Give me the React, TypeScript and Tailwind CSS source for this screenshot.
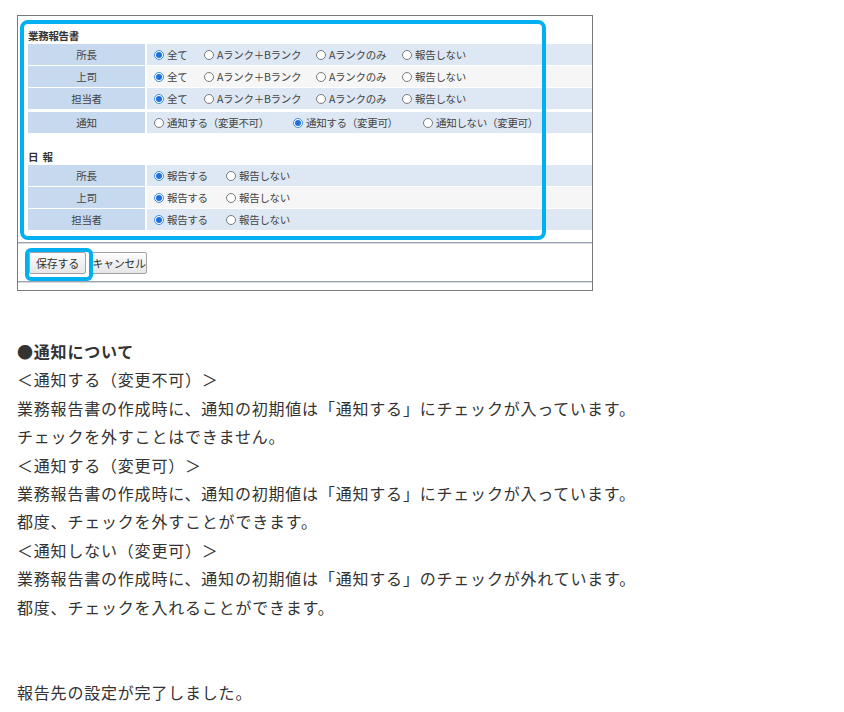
import React from "react";

type Opt = { label: string; checked?: boolean; w?: string };

function Radio({ checked }: { checked?: boolean }) {
  return checked ? (
    <span className="flex h-[10px] w-[10px] shrink-0 items-center justify-center rounded-full border border-[#3d8fe0] bg-white">
      <span className="h-[6px] w-[6px] rounded-full bg-[#1f6fdc]" />
    </span>
  ) : (
    <span className="h-[10px] w-[10px] shrink-0 rounded-full border border-[#7a7a7a] bg-white" />
  );
}

function Row({
  label,
  options,
  alt,
}: {
  label: string;
  options: Opt[];
  alt?: boolean;
}) {
  return (
    <div className="flex h-[21px] gap-[2px]">
      <div className="flex w-[117px] items-center justify-center bg-[#c6d9ef]">
        {label}
      </div>
      <div
        className={
          alt
            ? "flex flex-1 items-center bg-[#f6f6f6] pl-[7px]"
            : "flex flex-1 items-center bg-[#dde8f4] pl-[7px]"
        }
      >
        {options.map((o) => (
          <div
            key={o.label}
            className={"flex shrink-0 items-center gap-[3px] whitespace-nowrap " + (o.w || "")}
          >
            <Radio checked={o.checked} />
            <span>{o.label}</span>
          </div>
        ))}
      </div>
    </div>
  );
}

const rankOpts: Opt[] = [
  { label: "全て", checked: true, w: "w-[50px]" },
  { label: "Aランク＋Bランク", w: "w-[112px]" },
  { label: "Aランクのみ", w: "w-[86px]" },
  { label: "報告しない" },
];

const tsuchiOpts: Opt[] = [
  { label: "通知する（変更不可）", w: "w-[139px]" },
  { label: "通知する（変更可）", checked: true, w: "w-[130px]" },
  { label: "通知しない（変更可）" },
];

const nippoOpts: Opt[] = [
  { label: "報告する", checked: true, w: "w-[72px]" },
  { label: "報告しない" },
];

function Screenshot() {
  return (
    <div className="relative ml-[17px] mt-[15px] h-[276px] w-[576px] border border-[#7a7a7a] bg-white text-[10.5px] tracking-[-0.3px] text-[#444]">
      <div className="pl-[10px] pt-[11px]">
        <div className="h-[17px] font-bold leading-[17px] text-[#333]">業務報告書</div>
        <div className="flex flex-col gap-px">
          <Row label="所長" options={rankOpts} />
          <Row label="上司" options={rankOpts} alt />
          <Row label="担当者" options={rankOpts} />
        </div>
        <div className="mt-[3px]">
          <Row label="通知" options={tsuchiOpts} />
        </div>
        <div className="mt-[15px] h-[17px] font-bold leading-[17px] tracking-[4px] text-[#333]">
          日報
        </div>
        <div className="flex flex-col gap-px">
          <Row label="所長" options={nippoOpts} />
          <Row label="上司" options={nippoOpts} alt />
          <Row label="担当者" options={nippoOpts} />
        </div>
      </div>

      <div className="mt-[12px] h-[2px] border-t border-b border-t-[#9aa3ad] border-b-[#d6d9dd]" />

      <div className="mt-[8px] flex gap-[5px] pl-[11px]">
        <button className="h-[22px] w-[57px] whitespace-nowrap rounded-[2px] border border-[#a3a3a3] bg-gradient-to-b from-[#fdfdfd] to-[#e6e6e6] px-0 text-[11px] text-[#333]">
          保存する
        </button>
        <button className="h-[22px] w-[56px] whitespace-nowrap rounded-[2px] border border-[#a3a3a3] bg-gradient-to-b from-[#fdfdfd] to-[#e6e6e6] px-0 text-[11px] text-[#333]">
          キャンセル
        </button>
      </div>

      <div className="mt-[7px] h-[2px] border-t border-b border-t-[#9aa3ad] border-b-[#d6d9dd]" />

      {/* highlight frames drawn over the capture */}
      <div className="pointer-events-none absolute left-[2px] top-[4px] h-[220px] w-[526px] rounded-[8px] border-4 border-[#00b0f0]" />
      <div className="pointer-events-none absolute left-[7px] top-[232px] h-[33px] w-[68px] rounded-[6px] border-4 border-[#00b0f0]" />
    </div>
  );
}

export default function App() {
  const lines = [
    "＜通知する（変更不可）＞",
    "業務報告書の作成時に、通知の初期値は「通知する」にチェックが入っています。",
    "チェックを外すことはできません。",
    "＜通知する（変更可）＞",
    "業務報告書の作成時に、通知の初期値は「通知する」にチェックが入っています。",
    "都度、チェックを外すことができます。",
    "＜通知しない（変更可）＞",
    "業務報告書の作成時に、通知の初期値は「通知する」のチェックが外れています。",
    "都度、チェックを入れることができます。",
  ];

  return (
    <div
      className="min-h-[712px] w-[844px] bg-white"
      style={{ fontFamily: '"Noto Sans CJK JP", "Noto Sans", sans-serif' }}
    >
      <Screenshot />

      <div className="mt-[46px] px-[17px] text-[16px] leading-[28.4px] tracking-[0.05em] text-[#333]">
        <p className="font-bold">●通知について</p>
        {lines.map((l, i) => (
          <p key={i}>{l}</p>
        ))}
        <p>&nbsp;</p>
        <p>&nbsp;</p>
        <p>報告先の設定が完了しました。</p>
      </div>
    </div>
  );
}
